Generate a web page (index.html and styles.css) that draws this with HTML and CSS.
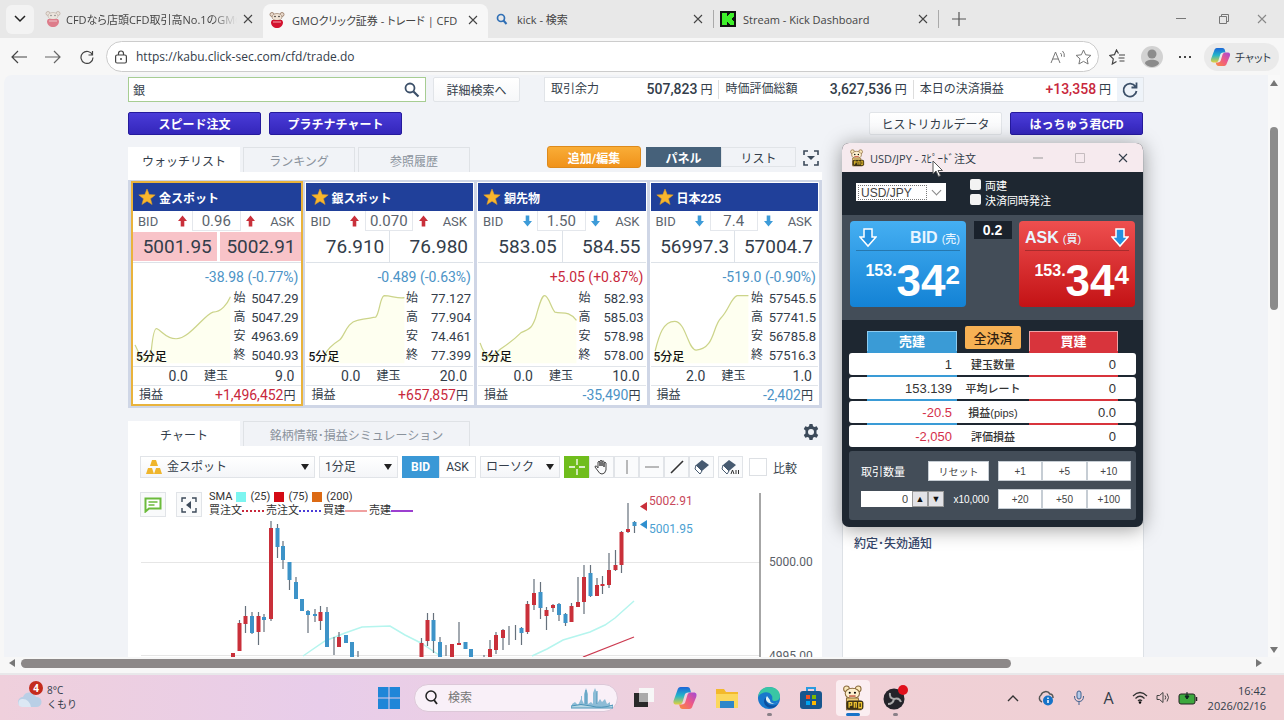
FILE: index.html
```html
<!DOCTYPE html>
<html lang="ja">
<head>
  <meta charset="UTF-8" />
  <meta name="viewport" content="width=device-width, initial-scale=1.0" />
  <title>GMOクリック証券 - トレード | CFD</title>
  <link rel="stylesheet" href="styles.css">
</head>
<body>
  <!-- shared icons -->
  <svg class="defs" aria-hidden="true">
    <symbol id="x" viewBox="0 0 10 10"><path d="M1 1l8 8M9 1L1 9" fill="none" stroke="currentColor" stroke-width="1.1"/></symbol>
    <symbol id="star" viewBox="0 0 18 18"><path d="M9 1l2.200 5.600 6 .3-4.700 3.800 1.600 5.800L9 13.200l-5.100 3.300 1.600-5.800L.8 6.900l6-.3z" fill="#f8b62d" stroke="#d99a2a" stroke-width=".6"/></symbol>
    <symbol id="arrow" viewBox="0 0 10 12"><path d="M5 0l5 6H7v6H3V6H0z" fill="currentColor"/></symbol>
    <symbol id="mascot" viewBox="0 0 16 18"><circle cx="3" cy="3.500" r="2" fill="#e8d9cc" stroke="#a58b78"/><circle cx="13" cy="3.500" r="2" fill="#e8d9cc" stroke="#a58b78"/><ellipse cx="8" cy="6" rx="5" ry="3.500" fill="#efe2d4" stroke="#a58b78" stroke-width=".8"/><path d="M3 9h10l1 2c0 4-3 6-6 6s-6-2-6-6z" fill="#d3122f"/><circle cx="6" cy="5.500" r=".7"/><circle cx="10" cy="5.500" r=".7"/><path d="M4 11h8" stroke="#f5a5ae"/></symbol>
    <symbol id="propug" viewBox="0 0 18 20"><circle cx="4" cy="3" r="2.200" fill="#fbe9bb" stroke="#8a6a3c" stroke-width=".8"/><circle cx="13" cy="3" r="2.200" fill="#fbe9bb" stroke="#8a6a3c" stroke-width=".8"/><ellipse cx="8.500" cy="6.500" rx="5.500" ry="4" fill="#fdf0cf" stroke="#8a6a3c" stroke-width=".8"/><path d="M4 10h9l2 9H4z" fill="#edcf7c" stroke="#8a6a3c" stroke-width=".8"/><circle cx="6.500" cy="6" r=".8"/><circle cx="10.500" cy="6" r=".8"/><path d="M6 8.500h5" stroke="#c0452e"/><rect x="4" y="12" width="13" height="7" rx="2" fill="#3b3013"/><path d="M6 17.500v-4h2v2H6m4 2v-4h1.500v4m2-4h2v4h-2z" stroke="#f0c531" fill="none"/></symbol>
    <symbol id="copilot" viewBox="0 0 22 22">
      <defs>
        <linearGradient id="cpa" x1="0" y1="0" x2="0" y2="1"><stop offset="0" stop-color="#1c66d8"/><stop offset=".5" stop-color="#23b5c9"/><stop offset="1" stop-color="#e4d13a"/></linearGradient>
        <linearGradient id="cpb" x1="1" y1="0" x2="0" y2="1"><stop offset="0" stop-color="#a248d8"/><stop offset=".5" stop-color="#ef5a84"/><stop offset="1" stop-color="#f98c3a"/></linearGradient>
      </defs>
      <path d="M7 1h6c2 0 2.500 1 3 3l.5 2H14c-2 0-3 1-3.500 3L9 14c-.5 2-1.500 3-3.500 3H3c-2.500 0-3-2-2.300-4L4 4c.6-2 1.500-3 3-3z" fill="url(#cpa)"/>
      <path d="M15 21H9c-2 0-2.500-1-3-3l-.5-1H8c2 0 3-1 3.500-3L13 9c.5-2 1.500-3 3.500-3H19c2.500 0 3 2 2.300 4L18 18c-.6 2-1.500 3-3 3z" fill="url(#cpb)"/>
    </symbol>
  </svg>

  <div class="tabbar">
    <button class="tab-menu" aria-label="タブ操作"><svg width="12" height="8" viewBox="0 0 12 8"><path d="M1 1l5 5 5-5" fill="none" stroke="#222" stroke-width="1.500"/></svg></button>
    <div class="tab first">
      <svg class="faded" width="16" height="18"><use href="#mascot"/></svg>
      <span class="tab-title">CFDなら店頭CFD取引高No.1のGMC</span>
      <button class="tab-close" aria-label="閉じる"><svg width="10" height="10"><use href="#x"/></svg></button>
    </div>
    <div class="tab active">
      <svg width="16" height="18"><use href="#mascot"/></svg>
      <span class="tab-title">GMOクリック証券 - トレード | CFD</span>
      <button class="tab-close" aria-label="閉じる"><svg width="10" height="10"><use href="#x"/></svg></button>
    </div>
    <div class="tab">
      <svg width="16" height="18" viewBox="0 0 16 18"><circle cx="7" cy="8" r="3.500" fill="none" stroke="#2f6fb5" stroke-width="1.700"/><path d="M9.500 10.500l3 3.500" stroke="#2f6fb5" stroke-width="2"/></svg>
      <span class="tab-title">kick - 検索</span>
      <button class="tab-close" aria-label="閉じる"><svg width="10" height="10"><use href="#x"/></svg></button>
    </div>
    <div class="tab divided">
      <svg width="16" height="16" viewBox="0 0 16 16"><path d="M0 0h16v16H0z" fill="#111"/><path d="M2 2h5v3h1V4h1V3h1V2h4v4h-1v1h-1v2h1v1h1v4h-4v-1H9v-1H8v-1H7v3H2z" fill="#3fef2b"/></svg>
      <span class="tab-title">Stream - Kick Dashboard</span>
      <button class="tab-close" aria-label="閉じる"><svg width="10" height="10"><use href="#x"/></svg></button>
    </div>
    <button class="new-tab" aria-label="新しいタブ"><svg width="14" height="14" viewBox="0 0 14 14"><path d="M7 0v14M0 7h14" stroke="#555" stroke-width="1.200"/></svg></button>
    <div class="window-controls">
      <button aria-label="最小化"><svg width="10" height="10" viewBox="0 0 10 10"><path d="M0 4.500h10" stroke="#777"/></svg></button>
      <button aria-label="元に戻す"><svg width="10" height="10" viewBox="0 0 10 10"><path d="M.5 2.500h7v7h-7zM2.500 2.500v-2h7v7h-2" fill="none" stroke="#777"/></svg></button>
      <button aria-label="閉じる"><svg class="grey" width="10" height="10"><use href="#x"/></svg></button>
    </div>
  </div>

  <div class="addressbar">
    <button class="nav" aria-label="戻る"><svg width="16" height="14" viewBox="0 0 16 14"><path d="M7 1L1 7l6 6M1 7h15" fill="none" stroke="#444" stroke-width="1.200"/></svg></button>
    <button class="nav" aria-label="進む"><svg width="16" height="14" viewBox="0 0 16 14"><path d="M9 1l6 6-6 6M15 7H0" fill="none" stroke="#666" stroke-width="1.200"/></svg></button>
    <button class="nav" aria-label="更新"><svg width="14" height="14" viewBox="0 0 14 14"><path d="M12.500 5A6 6 0 1 0 13 7.500M12.500 1v4H8.500" fill="none" stroke="#444" stroke-width="1.200"/></svg></button>
    <div class="url-box">
      <svg width="12" height="14" viewBox="0 0 12 14"><rect x=".6" y="5" width="10.800" height="8" rx="1.500" fill="none" stroke="#444" stroke-width="1.200"/><path d="M3.500 5V3.500a2.500 2.500 0 0 1 5 0V5" fill="none" stroke="#444" stroke-width="1.200"/><circle cx="6" cy="9" r="1" fill="#444"/></svg>
      <input type="text" aria-label="アドレス" value="https://kabu.click-sec.com/cfd/trade.do">
      <button aria-label="音声で読み上げる"><svg width="16" height="14" viewBox="0 0 16 14"><path d="M1 13L5.500 2 10 13M2.500 9h6M10.500 3q1.500 1.500 1 3.500M12.500 1q2.500 2.500 1.700 6" fill="none" stroke="#777"/></svg></button>
      <button aria-label="お気に入りに追加"><svg width="17" height="16" viewBox="0 0 17 16"><path d="M8.500 1l2.200 4.800 5.200.6-3.900 3.500 1.100 5.100-4.600-2.600L3.900 15 5 9.900 1.100 6.400l5.200-.6z" fill="none" stroke="#777"/></svg></button>
    </div>
    <button aria-label="お気に入り"><svg width="17" height="16" viewBox="0 0 17 16"><path d="M9.500 4.500L7.500 1 5.500 5.600.8 6.400l3.500 3.500-1 5.100 4.200-2.500M10 6h6M9.500 9h6M10.500 12h5" fill="none" stroke="#444" stroke-width="1.200"/></svg></button>
    <button aria-label="プロフィール"><svg width="22" height="22" viewBox="0 0 22 22"><circle cx="11" cy="11" r="11" fill="#d2d2d2"/><circle cx="11" cy="8" r="4.500" fill="#8b8b8b"/><path d="M4 17.500c0-5 14-5 14 0-3 4.500-11 4.500-14 0z" fill="#8b8b8b"/></svg></button>
    <button aria-label="設定など"><svg width="14" height="4" viewBox="0 0 14 4"><path d="M1 1h2v2H1zM6 1h2v2H6zM11 1h2v2h-2z" fill="#444"/></svg></button>
    <button class="chat"><svg width="21" height="20"><use href="#copilot"/></svg>チャット</button>
  </div>

  <div class="viewport">
    <main class="page">
      <div class="page-inner">
        <div class="top-row">
          <div class="search">
            <input type="text" aria-label="銘柄検索" value="銀">
            <svg width="16" height="16" viewBox="0 0 16 16"><circle cx="6" cy="6" r="4.500" fill="none" stroke="#3c5069" stroke-width="1.800"/><path d="M9.500 9.500l5 5" stroke="#3c5069" stroke-width="2.200"/></svg>
          </div>
          <button class="light-btn detail">詳細検索へ</button>
          <dl class="summary">
            <div><dt>取引余力</dt><dd><b>507,823</b> 円</dd></div>
            <div><dt>時価評価総額</dt><dd><b>3,627,536</b> 円</dd></div>
            <div><dt>本日の決済損益</dt><dd><b class="red">+13,358</b> 円</dd></div>
            <button aria-label="更新"><svg width="18" height="18" viewBox="0 0 18 18"><path d="M14.500 5.500A6.500 6.500 0 1 0 15.500 10M15.500 1.500v5h-5" fill="none" stroke="#3c5069" stroke-width="1.800"/></svg></button>
          </dl>
        </div>
        <div class="link-row">
          <button class="purple-btn">スピード注文</button>
          <button class="purple-btn">プラチナチャート</button>
          <button class="light-btn history">ヒストリカルデータ</button>
          <button class="purple-btn last">はっちゅう君CFD</button>
        </div>

        <div class="columns">
          <div class="main-col">
            <div class="section-head">
              <button class="sec-tab on">ウォッチリスト</button>
              <button class="sec-tab">ランキング</button>
              <button class="sec-tab">参照履歴</button>
              <span class="spacer"></span>
              <button class="orange-btn">追加/編集</button>
              <div class="switch"><button class="on">パネル</button><button>リスト</button></div>
              <button class="icon-btn" aria-label="折りたたむ"><svg width="16" height="16" viewBox="0 0 16 16"><path d="M1 5V1h4M11 1h4v4M15 11v4h-4M5 15H1v-4" fill="none" stroke="#3c4a5a" stroke-width="1.600"/><path d="M4 6h8l-4 4z" fill="#3c4a5a"/></svg></button>
            </div>
            <div class="watch">
              <article class="card selected">
                <h2><svg width="18" height="18"><use href="#star"/></svg>金スポット</h2>
                <div class="spread"><span>BID</span><svg class="up" width="9" height="12"><use href="#arrow"/></svg><b>0.96</b><svg class="up" width="9" height="12"><use href="#arrow"/></svg><span>ASK</span></div>
                <div class="prices hot"><span>5001.95</span><span>5002.91</span></div>
                <div class="change blue">-38.98 (-0.77%)</div>
                <div class="mini">
                  <div class="mini-chart">
                    <svg viewBox="0 0 98 68"><path class="fill" d="M2 50Q5 58 10 64Q16 64 18 54Q20 34 23 34C28 36 32 44 42 44C55 44 70 20 78 18C86 18 92 10 95 3V68H2z"/><path class="line" d="M2 50Q5 58 10 64Q16 64 18 54Q20 34 23 34C28 36 32 44 42 44C55 44 70 20 78 18C86 18 92 10 95 3"/></svg>
                    <span>5分足</span>
                  </div>
                  <dl><dt>始</dt><dd>5047.29</dd><dt>高</dt><dd>5047.29</dd><dt>安</dt><dd>4963.69</dd><dt>終</dt><dd>5040.93</dd></dl>
                </div>
                <div class="position"><span>0.0</span><span class="jp">建玉</span><span>9.0</span></div>
                <div class="profit"><span>損益</span><span><b class="red">+1,496,452</b>円</span></div>
              </article>
              <article class="card">
                <h2><svg width="18" height="18"><use href="#star"/></svg>銀スポット</h2>
                <div class="spread"><span>BID</span><svg class="up" width="9" height="12"><use href="#arrow"/></svg><b>0.070</b><svg class="up" width="9" height="12"><use href="#arrow"/></svg><span>ASK</span></div>
                <div class="prices"><span>76.910</span><span>76.980</span></div>
                <div class="change blue">-0.489 (-0.63%)</div>
                <div class="mini">
                  <div class="mini-chart">
                    <svg viewBox="0 0 98 68"><path class="fill" d="M18 60Q22 52 33 45C38 40 40 28 50 26C58 24 62 24 68 23C72 18 72 4 76 2C84 2 88 5 96 4V68H18z"/><path class="line" d="M18 60Q22 52 33 45C38 40 40 28 50 26C58 24 62 24 68 23C72 18 72 4 76 2C84 2 88 5 96 4"/></svg>
                    <span>5分足</span>
                  </div>
                  <dl><dt>始</dt><dd>77.127</dd><dt>高</dt><dd>77.904</dd><dt>安</dt><dd>74.461</dd><dt>終</dt><dd>77.399</dd></dl>
                </div>
                <div class="position"><span>0.0</span><span class="jp">建玉</span><span>20.0</span></div>
                <div class="profit"><span>損益</span><span><b class="red">+657,857</b>円</span></div>
              </article>
              <article class="card">
                <h2><svg width="18" height="18"><use href="#star"/></svg>銅先物</h2>
                <div class="spread"><span>BID</span><svg class="down" width="9" height="12"><use href="#arrow"/></svg><b>1.50</b><svg class="down" width="9" height="12"><use href="#arrow"/></svg><span>ASK</span></div>
                <div class="prices"><span>583.05</span><span>584.55</span></div>
                <div class="change red">+5.05 (+0.87%)</div>
                <div class="mini">
                  <div class="mini-chart">
                    <svg viewBox="0 0 98 68"><path class="fill" d="M2 48Q6 60 12 62Q18 58 22 54Q34 46 42 38C52 34 53 32 56 24C60 10 62 2 65 2C69 2 71 14 75 18C82 20 88 16 96 26V68H2z"/><path class="line" d="M2 48Q6 60 12 62Q18 58 22 54Q34 46 42 38C52 34 53 32 56 24C60 10 62 2 65 2C69 2 71 14 75 18C82 20 88 16 96 26"/></svg>
                    <span>5分足</span>
                  </div>
                  <dl><dt>始</dt><dd>582.93</dd><dt>高</dt><dd>585.03</dd><dt>安</dt><dd>578.98</dd><dt>終</dt><dd>578.00</dd></dl>
                </div>
                <div class="position"><span>0.0</span><span class="jp">建玉</span><span>10.0</span></div>
                <div class="profit"><span>損益</span><span><b class="blue">-35,490</b>円</span></div>
              </article>
              <article class="card">
                <h2><svg width="18" height="18"><use href="#star"/></svg>日本225</h2>
                <div class="spread"><span>BID</span><svg class="down" width="9" height="12"><use href="#arrow"/></svg><b>7.4</b><svg class="down" width="9" height="12"><use href="#arrow"/></svg><span>ASK</span></div>
                <div class="prices"><span>56997.3</span><span>57004.7</span></div>
                <div class="change blue">-519.0 (-0.90%)</div>
                <div class="mini">
                  <div class="mini-chart">
                    <svg viewBox="0 0 98 68"><path class="fill" d="M4 56C8 40 12 27 23 27C34 27 36 55 44 55C62 54 60 32 68 24C76 16 78 4 84 2H95V68H4z"/><path class="line" d="M4 56C8 40 12 27 23 27C34 27 36 55 44 55C62 54 60 32 68 24C76 16 78 4 84 2H95"/></svg>
                    <span>5分足</span>
                  </div>
                  <dl><dt>始</dt><dd>57545.5</dd><dt>高</dt><dd>57741.5</dd><dt>安</dt><dd>56785.8</dd><dt>終</dt><dd>57516.3</dd></dl>
                </div>
                <div class="position"><span>2.0</span><span class="jp">建玉</span><span>1.0</span></div>
                <div class="profit"><span>損益</span><span><b class="blue">-2,402</b>円</span></div>
              </article>
            </div>

            <div class="section-head chart-head">
              <button class="sec-tab on">チャート</button>
              <button class="sec-tab wide">銘柄情報･損益シミュレーション</button>
              <span class="spacer"></span>
              <button class="icon-btn" aria-label="設定"><svg width="16" height="16" viewBox="0 0 16 16"><path d="M6.500 0h3l.5 2.300 1.500.8 2.200-.8L15.200 5l-1.700 1.500v3L15.200 11l-1.500 2.700-2.200-.8-1.500.8-.5 2.300h-3L6 13.700l-1.500-.8-2.200.8L.8 11l1.700-1.500v-3L.8 5l1.500-2.700 2.200.8L6 2.300z" fill="#3c4a5a"/><circle cx="8" cy="8" r="3" fill="#f1f3f7"/></svg></button>
            </div>
            <div class="chart-card">
              <div class="toolbar">
                <label class="pick product">
                  <svg width="16" height="15" viewBox="0 0 16 15"><path d="M6 0h4l2 6H4zM2 8h4l2 6H0zM10 8h4l2 6H8z" fill="#efb52c"/></svg>
                  <select aria-label="銘柄"><option>金スポット</option></select>
                </label>
                <label class="pick term"><select aria-label="足種"><option>1分足</option></select></label>
                <div class="bidask"><button class="on">BID</button><button>ASK</button></div>
                <label class="pick style"><select aria-label="チャート種類"><option>ローソク</option></select></label>
                <div class="tools">
                  <button class="on" aria-label="十字線"><svg width="18" height="18" viewBox="0 0 18 18"><path d="M9 1v6M9 11v6M1 9h6M11 9h6" stroke="#fff" stroke-width="1.300"/></svg></button>
                  <button aria-label="移動"><svg width="16" height="16" viewBox="0 0 16 16"><path d="M4 12L1 8q0-1.500 1.500-1L4 9V3q1-1.500 2 0v4V2q1-1.500 2 0v5V2.500q1-1.500 2 0V8V4q1-1.500 2 0v7q-1 4-4 4-2.500 0-4-3z" fill="none" stroke="#444"/></svg></button>
                  <button aria-label="垂直線"><svg width="16" height="16" viewBox="0 0 16 16"><path d="M8 1v14" stroke="#777"/></svg></button>
                  <button aria-label="水平線"><svg width="16" height="16" viewBox="0 0 16 16"><path d="M1 8h14" stroke="#777"/></svg></button>
                  <button aria-label="トレンドライン"><svg width="16" height="16" viewBox="0 0 16 16"><path d="M2 14L14 2" stroke="#333" stroke-width="1.600"/></svg></button>
                  <button aria-label="消去"><svg width="16" height="16" viewBox="0 0 16 16"><path d="M8 1l7 5-7 6-6-6z" fill="#465a70"/><path d="M2 6l6 6-2 3-5-5z" fill="#fff" stroke="#465a70"/></svg></button>
                </div>
                <div class="tools"><button aria-label="すべて消去"><svg width="20" height="17" viewBox="0 0 20 17"><path d="M8 1l7 5-7 6-6-6z" fill="#465a70"/><path d="M2 6l6 6-2 3-5-5z" fill="#fff" stroke="#465a70"/><path d="M10 15l1.500-4 1.500 4M15 11v4M17.500 11v4" fill="none" stroke="#333"/></svg></button></div>
                <label class="compare"><input type="checkbox">比較</label>
              </div>
              <div class="plot">
                <svg class="candles" viewBox="128 484 694 174">
                  <path d="M141 562.500h619M141 655.500h619" stroke="#e6e6e6"/>
                  <path d="M760 493v164" stroke="#888" stroke-width="1.500"/>
                  <path class="sma25" d="M303 656L325 641L345 633L362 627L390 626L405 635L421 643L433 651L442 657M532 656L547 649L563 640L590 632L605 625L615 618L634 601"/>
                  <path class="sma75" d="M583 657L634 637"/>
                  <path class="wick" d="M239.500 620V651M245.500 606V633M252 612V634M258.500 612V645M264 614V632M271 521V621M277.500 524V558M283 541V569M289.500 562V590M296 577V599M308 610V633M315 609V622M320.500 606V630M327 607V647M334 637V655M339 632V647M358 651V657M421.500 638V656M427.500 613V646M433.500 613V653M440 637V656M446 645V656M459 622V645M484 655V657M490 640V656M496 632V654M503 629V650M509 626V645M515.500 625V640M521.500 627V645M527.500 601V634M534 579V610M540.500 582V619M546.500 607V630M553 604V612M559 603V621M565.500 613V626M571.500 603V622M578 577V607M584 565V614M590.500 565V597M597 578V596M602.500 576V594M609 553V588M615.500 550V571M621.500 531V573M628 503V533M634.500 521V533"/>
                  <path class="bull" d="M233 653V657M239.500 623V651M245.500 616V624M258.500 616V632M271 528V619M320.500 612V621M339 637V647M421.500 643V657M427.500 620V641M452 644V657M459 643V645M490 649V657M496 635V650M503 630V638M527.500 604V632M534 593V605M546.500 610V616M553 605V608M571.500 606V622M578 602V607M584 577V602M597 585V596M602.500 584V586M609 570V585M615.500 565V570M621.500 532V565M628 529V532"/>
                  <path class="bear" d="M252 616V633M264 617V620M277.500 528V547M283 546V560M289.500 562V580M296 582V599M302 599V611M308 611V615M315 614V616M327 612V647M346 635V643M352 642V657M433.500 620V641M440 642V657M465.500 642V649M471 649V657M521.500 628V633M540.500 592V608M559 604V615M565.500 614V623M590.500 573V596M634.500 522V526"/>
                  <path class="ask-mark" d="M647 502v9l-7-4.500z"/><path class="bid-mark" d="M647 520v9l-7-4.500z"/>
                  <text class="ask-label" x="649" y="505">5002.91</text>
                  <text class="bid-label" x="649" y="533">5001.95</text>
                  <text x="769" y="566">5000.00</text>
                  <text x="769" y="660">4995.00</text>
                </svg>
                <div class="legend">
                  <button aria-label="コメント"><svg width="18" height="16" viewBox="0 0 18 16"><path d="M1.500 1.500h15v10H5l-3.500 3z" fill="#fff" stroke="#6cbb3c" stroke-width="2"/><path d="M4.500 5h9M4.500 8h6" stroke="#6cbb3c" stroke-width="1.500"/></svg></button>
                  <button class="second" aria-label="凡例を閉じる"><svg width="16" height="16" viewBox="0 0 16 16"><path d="M1 5V1h4M11 1h4v4M15 11v4h-4M5 15H1v-4" fill="none" stroke="#3c4a5a" stroke-width="1.400"/><path d="M10 4v8L5 8z" fill="#3c4a5a"/></svg></button>
                  <div class="legend-text">
                    <div>SMA <i class="c25"></i> (25) <i class="c75"></i> (75) <i class="c200"></i> (200)</div>
                    <div class="orders">買注文<s class="dot-red"></s>売注文<s class="dot-blue"></s>買建<s class="pink"></s>売建<s class="violet"></s></div>
                  </div>
                </div>
              </div>
            </div>
          </div>
          <aside class="side-col"><h3>約定･失効通知</h3></aside>
        </div>
      </div>
    </main>
    <div class="vscroll"><svg width="8" height="6" viewBox="0 0 8 6"><path d="M4 0l4 6H0z" fill="#777"/></svg><span></span><svg class="end" width="8" height="6" viewBox="0 0 8 6"><path d="M4 6l4-6H0z" fill="#777"/></svg></div>
  </div>
  <div class="hscroll"><svg width="6" height="8" viewBox="0 0 6 8"><path d="M0 4l6-4v8z" fill="#777"/></svg><span></span><svg class="end" width="6" height="8" viewBox="0 0 6 8"><path d="M6 4L0 0v8z" fill="#777"/></svg></div>

  <footer class="taskbar">
    <div class="weather">
      <div class="weather-icon"><svg width="28" height="22" viewBox="0 0 28 22"><path d="M7 20a5 5 0 0 1 0-10 7 7 0 0 1 13 0 5 5 0 0 1 1 10z" fill="#b9cfe6"/><path d="M6 20a4 4 0 0 1 1-8q6 0 8 8z" fill="#dce8f4"/></svg><b>4</b></div>
      <div>8°C<br>くもり</div>
    </div>
    <div class="apps">
      <button aria-label="スタート"><svg width="24" height="24" viewBox="0 0 24 24"><path d="M1 1h10.500v10.500H1zM12.500 1H23v10.500H12.500zM1 12.500h10.500V23H1zM12.500 12.500H23V23H12.500z" fill="#1f86d8"/></svg></button>
      <label class="task-search">
        <svg width="14" height="15" viewBox="0 0 14 15"><circle cx="7" cy="6" r="5" fill="none" stroke="#222" stroke-width="1.500"/><path d="M10 10l3 4" stroke="#222" stroke-width="1.800"/></svg>
        <input type="text" aria-label="検索" placeholder="検索">
        <svg width="42" height="24" viewBox="0 0 42 24"><path d="M1 22v-4l3-2 3 3 3-6v-3h1v4l2 4V8l2-6 2 6v10l3-2 2 2V7l2-5 2 5v11l3-5 2 3 3-3 2 5 3-2v6z" fill="#8dbcd6"/><path d="M0 20q10-3 20 0t22-1v3H0zM15 4v14M26 5v13" stroke="#4a93b8" fill="#b7d7e4"/></svg>
      </label>
      <button aria-label="タスクビュー"><svg width="24" height="24" viewBox="0 0 24 24"><path d="M8 2h15v14H8z" fill="#f7f7f7"/><path d="M3 7h14v14H3z" fill="#292929"/><path d="M8 7h9v9H8z" fill="#aaa"/></svg></button>
      <button aria-label="Copilot"><svg width="24" height="24"><use href="#copilot"/></svg></button>
      <button aria-label="エクスプローラー"><svg width="24" height="24" viewBox="0 0 24 24"><path d="M1 3h8l2 3h12v16H1z" fill="#f3b92b"/><path d="M1 8h22v14H1z" fill="#fbd75c"/><path d="M5 15h14v7H5z" fill="#2f86c9"/></svg></button>
      <button class="running" aria-label="Edge"><svg width="24" height="24" viewBox="0 0 24 24"><circle cx="12" cy="12" r="11" fill="#1878cc"/><path d="M1 11C2 4 7 1 12 1c7 0 11 4 11 9 0 4-3 5-6 5-3-1-1-3-2-5-3-6-11-4-14 1z" fill="#39c6a4"/><path d="M9 12c-1 5 4 9 10 7 2-1 2-1 1 0-4 5-12 3-13-3 0-3 1-4 2-4z" fill="#0e4f9e"/><path d="M10 10q-3 4 2 7 4 2 9-1l-2 1q-6 1-6-3z" fill="#dff0f4"/></svg></button>
      <button aria-label="Microsoft Store"><svg width="24" height="24" viewBox="0 0 24 24"><path d="M8 6V2h8v4" fill="none" stroke="#2a9be0" stroke-width="2"/><rect x="1" y="5" width="22" height="18" rx="3" fill="#18568e"/><path d="M7 9h4v4H7z" fill="#f25022"/><path d="M13 9h4v4h-4z" fill="#7fba00"/><path d="M7 15h4v4H7z" fill="#00a4ef"/><path d="M13 15h4v4h-4z" fill="#ffb900"/></svg></button>
      <button class="current" aria-label="はっちゅう君CFD"><svg width="24" height="26"><use href="#propug"/></svg></button>
      <button class="running" aria-label="OBS"><svg width="26" height="26" viewBox="0 0 26 26"><circle cx="12" cy="14" r="10.500" fill="#24242a"/><path d="M12 14q-5-1-4-6M12 14q5-2 7 3M12 14q-1 5-6 5" fill="none" stroke="#aaa" stroke-width="2"/><circle cx="21" cy="5" r="5" fill="#e0101c"/></svg></button>
    </div>
    <div class="tray">
      <svg width="12" height="8" viewBox="0 0 12 8"><path d="M1 7l5-5 5 5" fill="none" stroke="#333" stroke-width="1.400"/></svg>
      <svg width="18" height="16" viewBox="0 0 18 16"><path d="M5 12a4 4 0 0 1-1-7 5 5 0 0 1 9-1q3 0 3 4" fill="none" stroke="#555" stroke-width="1.500"/><circle cx="11" cy="10.500" r="5" fill="#1673c8"/><path d="M11 7.500v1.500M11 10v3" stroke="#fff" stroke-width="1.500"/></svg>
      <svg width="12" height="16" viewBox="0 0 12 16"><rect x="4" y="1" width="4" height="8" rx="2" fill="#b4cae8" stroke="#42628f"/><path d="M1.500 6q0 5.500 4.500 5.500T10.500 6M6 12v3" fill="none" stroke="#42628f"/></svg>
      <span class="ime">A</span>
      <div class="status">
        <svg width="16" height="13" viewBox="0 0 16 13"><path d="M1 5q7-7 14 0M3.500 7.500q4.500-4.500 9 0M6 10q2-2 4 0" fill="none" stroke="#333" stroke-width="1.200"/><circle cx="8" cy="11.500" r="1.200"/></svg>
        <svg width="14" height="13" viewBox="0 0 14 13"><path d="M1 4.500h2.500L7 1.500v10L3.500 8.500H1zM9 4.500q1.500 2 0 4M11 2.500q3 4 0 8" fill="none" stroke="#444"/></svg>
        <svg width="20" height="14" viewBox="0 0 20 14"><rect x="1" y="3" width="16" height="10" rx="2" fill="#3ea83e" stroke="#222"/><path d="M18.500 6v4" stroke="#222" stroke-width="1.500"/><path d="M9 1v4M7 5l2 3 2-3z" stroke="#122" fill="#122"/></svg>
      </div>
      <time>16:42<br>2026/02/16</time>
    </div>
  </footer>

  <!-- floating order window -->
  <section class="order">
    <header>
      <svg width="16" height="18"><use href="#propug"/></svg>
      <h1>USD/JPY - ｽﾋﾟｰﾄﾞ注文</h1>
      <button aria-label="最小化"><svg width="10" height="10" viewBox="0 0 10 10"><path d="M0 5h10" stroke="#999"/></svg></button>
      <button aria-label="最大化"><svg width="10" height="10" viewBox="0 0 10 10"><path d="M.5.500h9v9h-9z" fill="none" stroke="#c5bcbf"/></svg></button>
      <button aria-label="閉じる"><svg width="10" height="10"><use href="#x"/></svg></button>
    </header>
    <div class="order-options">
      <label class="pair"><select aria-label="通貨ペア"><option>USD/JPY</option></select></label>
      <div class="checks">
        <label><input type="checkbox">両建</label>
        <label><input type="checkbox">決済同時発注</label>
      </div>
    </div>
    <div class="quotes">
      <button class="quote bid">
        <span class="quote-head"><svg width="18" height="20" viewBox="0 0 18 20"><path d="M5 1h8v8h4l-8 9-8-9h4z" fill="#2491e0" stroke="#fff" stroke-width="1.500"/></svg><span>BID<small>(売)</small></span></span>
        <span class="rate"><span>153.</span><strong>34</strong><em>2</em></span>
      </button>
      <span class="gap-value">0.2</span>
      <button class="quote ask">
        <span class="quote-head"><span>ASK<small>(買)</small></span><svg width="18" height="20" viewBox="0 0 18 20"><path d="M5 1h8v8h4l-8 9-8-9h4z" fill="#2491e0" stroke="#fff" stroke-width="1.500"/></svg></span>
        <span class="rate"><span>153.</span><strong>34</strong><em>4</em></span>
      </button>
    </div>
    <div class="holdings">
      <table>
        <thead>
          <tr><th><span class="sell">売建</span></th><th><button class="close-all">全決済</button></th><th><span class="buy">買建</span></th></tr>
        </thead>
        <tbody>
          <tr><td>1</td><th scope="row">建玉数量</th><td>0</td></tr>
          <tr><td>153.139</td><th scope="row">平均レート</th><td>0</td></tr>
          <tr><td class="red">-20.5</td><th scope="row">損益(pips)</th><td>0.0</td></tr>
          <tr><td class="red">-2,050</td><th scope="row">評価損益</th><td>0</td></tr>
        </tbody>
      </table>
      <div class="amount">
        <div class="amount-left">
          <div class="amount-row"><label for="qty">取引数量</label><button class="reset">リセット</button></div>
          <div class="amount-row"><div class="stepper"><input id="qty" type="text" value="0"><button aria-label="増やす">▲</button><button aria-label="減らす">▼</button></div><span>x10,000</span></div>
        </div>
        <div class="amount-grid">
          <button>+1</button><button>+5</button><button>+10</button>
          <button>+20</button><button>+50</button><button>+100</button>
        </div>
      </div>
    </div>
    <svg class="cursor" width="12" height="18" viewBox="0 0 12 18"><path d="M1 1v13l3-3 2.500 5.500 2-1L6 10.500h4.500z" fill="#fff" stroke="#555"/></svg>
  </section>
</body>
</html>
```
FILE: styles.css
```css
* {
  box-sizing: border-box;
}
body {
  margin: 0;
  height: 100vh;
  display: flex;
  flex-direction: column;
  overflow: hidden;
  position: relative;
  background: #f7f7f7;
  font-family: Roboto, 'Noto Sans CJK JP', sans-serif;
  font-size: 12px;
  color: #333d4a;
}
button, input, select {
  font: inherit;
  color: inherit;
  margin: 0;
  padding: 0;
}
button {
  border: none;
  background: none;
  display: flex;
  align-items: center;
  justify-content: center;
  cursor: pointer;
  white-space: nowrap;
}
select {
  appearance: none;
  border: none;
  background: none;
}
h1, h2, h3, dl, dt, dd {
  margin: 0;
  font-weight: normal;
}
svg {
  flex: none;
}
.defs {
  position: absolute;
  width: 0;
  height: 0;
}
.red { color: #c8283c; }
.blue { color: #4c93c6; }
.spacer { flex: 1; }

/* browser tabs */
.tabbar {
  flex: none;
  height: 38px;
  background: #e8e8e8;
  display: flex;
  align-items: center;
  padding: 0 6px;
  font-family: 'Open Sans', 'Noto Sans CJK JP', sans-serif;
  font-size: 11px;
  color: #444;
}
.tab-menu {
  width: 28px;
  height: 29px;
  border-radius: 6px;
  background: #f3f3f3;
}
.tab {
  flex: 0 1 225px;
  min-width: 0;
  height: 38px;
  padding: 0 9px 0 6px;
  display: flex;
  align-items: center;
  gap: 7px;
}
.tab.first {
  flex-basis: 229px;
  padding-left: 11px;
  gap: 5px;
}
.tab.active {
  height: 34px;
  align-self: flex-end;
  padding-bottom: 3px;
  border-radius: 8px 8px 0 0;
  background: #f7f7f7;
}
.tab.divided {
  border-left: 1px solid #aaa;
  height: 18px;
}
.tab-title {
  flex: 1;
  min-width: 0;
  overflow: hidden;
  white-space: nowrap;
  font-feature-settings: 'palt';
}
.tab.first .tab-title {
  mask-image: linear-gradient(90deg, #000 85%, transparent);
}
.tab-close {
  width: 12px;
  height: 20px;
}
.faded {
  opacity: .5;
}
.new-tab {
  width: 40px;
  height: 18px;
  border-left: 1px solid #aaa;
}
.window-controls {
  margin-left: auto;
  display: flex;
}
.window-controls button {
  width: 43px;
  height: 30px;
}
.window-controls button:last-child {
  width: 33px;
}
.grey {
  color: #888;
}

/* address bar */
.addressbar {
  flex: none;
  height: 37px;
  display: flex;
  align-items: center;
  gap: 15px;
  padding: 3px 5px 3px 9px;
}
.nav {
  width: 19px;
}
.url-box {
  flex: 1;
  height: 31px;
  margin: 0 -5px;
  padding: 0 6px 0 8px;
  border: 1px solid #ccc;
  border-radius: 16px;
  background: #fff;
  display: flex;
  align-items: center;
  gap: 9px;
  font-family: 'Open Sans', sans-serif;
  font-size: 12px;
}
.url-box input {
  flex: 1;
  min-width: 0;
  border: none;
  outline: none;
  background: none;
}
.chat {
  height: 28px;
  padding: 0 8px 0 6px;
  margin-left: -3px;
  border-radius: 14px;
  background: #eaeaea;
  gap: 4px;
  font-size: 11px;
  font-feature-settings: 'palt';
}

/* page area */
.viewport {
  flex: 1;
  min-height: 0;
  display: flex;
  padding: 0 4px;
}
.page {
  flex: 1;
  min-width: 0;
  overflow: hidden;
  background: #f1f3f7;
  border-radius: 8px 0 0 0;
}
.page-inner {
  max-width: 1016px;
  margin: 0 auto;
  padding-top: 2px;
}
.vscroll {
  width: 12px;
  padding: 5px 2px 4px;
  background: #f9f9f9;
  display: flex;
  flex-direction: column;
  align-items: center;
}
.vscroll span {
  width: 8px;
  height: 32%;
  margin-top: 41px;
  border-radius: 4px;
  background: #8c8c8c;
}
.end {
  margin: auto 0 0 auto;
}
.vscroll .end {
  margin: auto 0 0;
}
.hscroll {
  flex: none;
  height: 18px;
  padding: 2px 22px 6px 9px;
  display: flex;
  align-items: center;
  gap: 6px;
  border-bottom: 2px solid #e8e8ea;
}
.hscroll .end {
  margin: 0 0 0 auto;
}
.hscroll span {
  width: 79%;
  height: 9px;
  border-radius: 5px;
  background: #8c8888;
}

.top-row {
  display: flex;
  height: 25px;
}
.search {
  flex: 0 1 298px;
  display: flex;
  align-items: center;
  padding: 0 5px 0 4px;
  border: 1px solid #a7cd92;
  background: #fff;
}
.search input {
  flex: 1;
  min-width: 0;
  border: none;
  outline: none;
  background: none;
}
.light-btn {
  border: 1px solid #e1e4e8;
  background: linear-gradient(#fff, #f6f7f9);
  border-radius: 2px;
}
.detail {
  width: 87px;
  margin-left: 7px;
}
.summary {
  flex: 1;
  margin-left: 24px;
  display: flex;
  align-items: center;
  border: 1px solid #e1e4e8;
  background: #fff;
  line-height: 18px;
}
.summary div {
  flex: 1 1 174px;
  display: flex;
  justify-content: space-between;
  padding: 0 6px;
  white-space: nowrap;
}
.summary div:nth-child(2) {
  flex-basis: 195px;
}
.summary div:nth-child(3) {
  flex-basis: 205px;
}
.summary div + div {
  border-left: 1px solid #ddd;
}
.summary b {
  font-size: 14px;
  font-weight: 500;
}
.summary button {
  width: 26px;
  height: 23px;
  background: #eef3f9;
}
.link-row {
  display: flex;
  gap: 8px;
  margin-top: 10px;
}
.purple-btn {
  width: 133px;
  height: 23px;
  border: 1px solid #251a9c;
  border-radius: 2px;
  background: linear-gradient(#4a3cd8, #3426bb);
  color: #fff;
  font-weight: bold;
}
.history {
  width: 133px;
  margin-left: auto;
}
.purple-btn.last {
  margin-right: 1px;
}
.columns {
  display: flex;
  gap: 20px;
  margin-top: 10px;
}
.main-col {
  flex: 1;
  min-width: 0;
}
.side-col {
  flex: 0 0 302px;
  height: 520px;
  margin-top: 5px;
  padding: 382px 11px 0;
  border: 1px solid #dde1e6;
  background: #fff;
}
.side-col h3 {
  font-size: 12px;
  line-height: 22px;
  color: #34466a;
  font-weight: 500;
}
.section-head {
  display: flex;
  align-items: flex-end;
  gap: 3px;
  height: 27px;
}
.sec-tab {
  flex: 0 0 112px;
  height: 25px;
  border: 1px solid #dfe2e6;
  border-bottom: none;
  color: #8a929c;
}
.sec-tab.on {
  border-color: #fff;
  background: #fff;
  color: #333d4a;
}
.sec-tab.wide {
  flex-basis: 227px;
}
.orange-btn {
  width: 94px;
  height: 22px;
  margin-bottom: 4px;
  border: 1px solid #de8a1c;
  border-radius: 3px;
  background: linear-gradient(#f9ad37, #f0921a);
  color: #fff;
  font-weight: bold;
}
.switch {
  display: flex;
  margin: 0 4px 5px 2px;
}
.switch button {
  width: 75px;
  height: 20px;
  border: 1px solid #e1e4e8;
}
.switch .on {
  border-color: #46617a;
  background: #46617a;
  color: #fff;
  font-weight: bold;
}
.icon-btn {
  height: 16px;
  margin: 0 3px 6px 0;
}

/* watch list */
.watch {
  display: grid;
  grid-template-columns: repeat(4, 1fr);
  gap: 3px;
  padding: 2px 3px 3px 4px;
  border-top: 8px solid #fff;
  background: #cfd6e6;
}
.card {
  min-width: 0;
  border: 1px solid #fff;
  background: #fff;
}
.card.selected {
  border-color: #e9b33c;
  outline: 1px solid #e9b33c;
}
.card h2 {
  height: 28px;
  padding-left: 5px;
  display: flex;
  align-items: center;
  gap: 3px;
  background: #20409a;
  color: #fff;
  font-size: 12px;
  font-weight: bold;
}
.spread {
  height: 20px;
  padding: 0 6px 0 5px;
  display: grid;
  grid-template-columns: 38px 12px 1fr 12px 38px;
  align-items: center;
  font-size: 13px;
  color: #5c646e;
}
.spread span:last-child {
  text-align: right;
}
.spread svg {
  justify-self: center;
}
.spread b {
  height: 20px;
  margin: 0 4px;
  border: 1px solid #e4e7ec;
  border-top: none;
  font-size: 15px;
  line-height: 20px;
  font-weight: normal;
  text-align: center;
}
.up { color: #c9303a; }
.down {
  color: #3d9bd8;
  transform: rotate(180deg);
}
.prices {
  height: 32px;
  display: grid;
  grid-template-columns: 1fr 1fr;
  border-bottom: 1px solid #dde2e8;
  font-size: 19px;
  line-height: 32px;
  text-align: right;
}
.prices span {
  padding-right: 5px;
}
.prices span + span {
  border-left: 1px solid #dde2e8;
}
.prices.hot span {
  height: 29px;
  margin-top: 1px;
  line-height: 30px;
  background: #f8c3c8;
}
.prices.hot span + span {
  border-left: 3px solid #fff;
}
.change {
  height: 26px;
  padding-right: 2px;
  line-height: 28px;
  font-size: 14px;
  text-align: right;
}
.mini {
  height: 77px;
  display: flex;
}
.mini-chart {
  flex: 1;
  min-width: 0;
  position: relative;
}
.mini-chart svg {
  display: block;
  width: 100%;
  height: 71px;
  margin-top: 4px;
}
.mini-chart .fill {
  fill: #fefff0;
}
.mini-chart .line {
  fill: none;
  stroke: #ccd48a;
  stroke-width: 1.2;
}
.mini-chart span {
  position: absolute;
  left: 3px;
  bottom: 2px;
  color: #111;
  font-weight: 500;
}
.mini dl {
  flex: 0 0 67px;
  display: grid;
  grid-template-columns: 12px 1fr;
  grid-auto-rows: 19px;
  line-height: 19px;
  padding-right: 2px;
  font-size: 13px;
  text-align: right;
}
.mini dt {
  font-size: 12px;
}
.position, .profit {
  height: 19px;
  border-top: 1px solid #e1e5ea;
  line-height: 18px;
}
.position {
  display: grid;
  grid-template-columns: 55px 54px 1fr;
  padding-right: 6px;
  font-size: 14px;
  text-align: right;
}
.position .jp {
  font-size: 12px;
  padding-right: 14px;
}
.profit {
  display: flex;
  justify-content: space-between;
  padding: 0 5px 0 6px;
}
.profit b {
  font-size: 14px;
  font-weight: normal;
}

/* chart */
.chart-head {
  margin-top: 11px;
}
.chart-head .icon-btn {
  margin-bottom: 6px;
}
.chart-card {
  background: #fff;
}
.toolbar {
  display: flex;
  align-items: center;
  gap: 4px;
  padding: 10px 22px 0 12px;
}
.pick {
  height: 22px;
  display: flex;
  align-items: center;
  gap: 5px;
  padding: 0 5px;
  border: 1px solid #e1e4e8;
  background: linear-gradient(#fff, #f4f5f8);
}
.pick select {
  flex: 1;
  min-width: 0;
}
.pick::after {
  content: '';
  border: 4px solid transparent;
  border-top: 6px solid #222;
  border-bottom: none;
}
.product { flex: 0 1 175px; }
.term { flex: 0 0 79px; }
.style { flex: 0 0 80px; }
.bidask, .tools {
  display: flex;
}
.bidask button {
  width: 37px;
  height: 22px;
  border: 1px solid #e1e4e8;
}
.bidask .on {
  border-color: #3a98d6;
  background: #3a98d6;
  color: #fff;
  font-weight: bold;
}
.tools button {
  width: 25px;
  height: 22px;
  border: 1px solid #e1e4e8;
  background: #fafbfc;
}
.tools .on {
  border-color: #70bd1c;
  background: #70bd1c;
}
.compare {
  display: flex;
  align-items: center;
  gap: 6px;
  margin-left: 2px;
  white-space: nowrap;
}
.compare input {
  appearance: none;
  width: 18px;
  height: 18px;
  border: 1px solid #dde0e4;
  background: #fff;
}
.plot {
  display: grid;
  margin-top: 6px;
}
.candles, .legend {
  grid-area: 1 / 1;
}
.candles {
  display: block;
  width: 100%;
}
.candles path {
  fill: none;
}
.candles .ask-mark { fill: #c9303a; }
.candles .bid-mark { fill: #2f8fcf; }
.candles text {
  font-size: 12px;
  fill: #5a6068;
}
.candles .ask-label { fill: #c8485a; }
.candles .bid-label { fill: #4c9fd2; }
.wick {
  stroke: #66717c;
  stroke-width: 1.2;
}
.bull {
  stroke: #c9303a;
  stroke-width: 4;
}
.bear {
  stroke: #3d93c8;
  stroke-width: 4;
}
.sma25 {
  stroke: #b5f5ee;
  stroke-width: 1.5;
}
.sma75 {
  stroke: #cc3a50;
  stroke-width: 1.3;
}
.legend {
  align-self: start;
  display: flex;
  padding: 6px 0 0 12px;
}
.legend button {
  width: 26px;
  height: 25px;
  margin-top: 2px;
  border: 1px solid #e1e4e8;
  background: #f9fafb;
}
.legend .second {
  margin: 2px 7px 0 10px;
}
.legend-text {
  font-size: 11px;
  line-height: 14px;
  color: #333;
  white-space: nowrap;
}
.legend-text div {
  display: flex;
  align-items: center;
  gap: 4px;
}
.legend-text .orders {
  gap: 0;
}
.legend-text i {
  width: 10px;
  height: 10px;
}
.c25 { background: #7cf5f0; }
.c75 { background: #d40a14; }
.c200 { background: #dc6a14; }
.legend-text s {
  width: 22px;
  margin-right: 2px;
  border-top: 2px solid;
}
.legend-text .dot-red {
  color: #c8283c;
  border-top-style: dotted;
}
.legend-text .dot-blue {
  color: #4a3cd8;
  border-top-style: dotted;
}
.pink { color: #f0a0a0; }
.violet { color: #9c3fd0; }

/* taskbar */
.taskbar {
  flex: none;
  height: 45px;
  display: grid;
  grid-template-columns: 1fr auto 1fr;
  align-items: center;
  background: linear-gradient(90deg, #efd0dc, #e8cdea 25%, #ecd0e2 42%, #f0d0d6 65%, #efd0d4);
  font-family: 'Open Sans', 'Noto Sans CJK JP', sans-serif;
  font-size: 10px;
}
.weather {
  display: flex;
  gap: 3px;
  padding-left: 16px;
  line-height: 14px;
}
.weather-icon {
  position: relative;
  padding-top: 4px;
}
.weather-icon b {
  position: absolute;
  top: -2px;
  right: 1px;
  width: 14px;
  height: 14px;
  border-radius: 50%;
  background: #c42b1c;
  color: #fff;
  text-align: center;
}
.apps {
  display: flex;
  align-items: center;
  gap: 8px;
}
.apps button {
  width: 34px;
  height: 36px;
  border-radius: 4px;
  position: relative;
}
.apps .current {
  background: #fbeef1;
}
.running::after, .current::after {
  content: '';
  position: absolute;
  bottom: 0;
  width: 5px;
  height: 3px;
  border-radius: 2px;
  background: #8a8088;
}
.apps .current::after {
  width: 14px;
  background: #1a73c9;
}
.task-search {
  width: 204px;
  height: 28px;
  padding: 0 4px 0 9px;
  border: 1px solid #dcc8d8;
  border-radius: 14px;
  background: #f9f0f8;
  display: flex;
  align-items: center;
  gap: 10px;
  font-size: 12px;
}
.task-search input {
  flex: 1;
  min-width: 0;
  border: none;
  background: none;
}
.tray {
  display: flex;
  align-items: center;
  justify-content: flex-end;
  gap: 18px;
  padding-right: 18px;
}
.tray time {
  font-size: 11px;
  line-height: 15px;
  text-align: right;
  margin-left: -8px;
}
.ime {
  font-size: 16px;
}
.status {
  display: flex;
  align-items: center;
  gap: 8px;
}

/* order window */
.order {
  position: absolute;
  left: 842px;
  top: 143px;
  width: 301px;
  border-radius: 7px;
  background: #1e2731;
  box-shadow: 0 2px 20px rgba(0, 0, 0, .4);
  font-family: 'Liberation Sans', 'Noto Sans CJK JP', sans-serif;
}
.order header {
  height: 29px;
  padding: 0 3px 0 7px;
  display: flex;
  align-items: center;
  border-radius: 7px 7px 0 0;
  background: #f6eaee;
  font-family: 'Open Sans', 'Noto Sans CJK JP', sans-serif;
}
.order h1 {
  flex: 1;
  margin-left: 5px;
  font-size: 11px;
}
.order header button {
  width: 42px;
  height: 28px;
}
.order header button:last-child {
  width: 35px;
  margin-left: 4px;
}
.order-options {
  height: 43px;
  padding: 5px 14px;
  display: flex;
  gap: 24px;
  font-size: 12px;
  color: #fff;
}
.pair {
  width: 90px;
  height: 18px;
  margin-top: 6px;
  padding: 2px 4px 2px 2px;
  background: #fff;
  color: #444;
  display: flex;
  align-items: center;
  gap: 6px;
}
.pair select {
  flex: 1;
  min-width: 0;
  height: 15px;
  padding-left: 2px;
  border: 1px dotted #777;
}
.pair::after {
  content: '';
  width: 6px;
  height: 6px;
  margin: 0 2px 4px 0;
  border: solid #888;
  border-width: 0 1px 1px 0;
  transform: rotate(45deg);
}
.checks label {
  display: flex;
  align-items: center;
  gap: 4px;
  height: 15px;
  font-size: 11px;
}
.checks input {
  appearance: none;
  width: 11px;
  height: 11px;
  border-radius: 2px;
  background: #f3f3f3;
}
.quotes {
  height: 105px;
  padding: 6px 8px 0;
  display: flex;
  justify-content: space-between;
  align-items: flex-start;
  background: #434d58;
}
.quote {
  width: 116px;
  height: 86px;
  padding: 5px 6px;
  border-radius: 4px;
  flex-direction: column;
  align-items: stretch;
  justify-content: flex-start;
  color: #e9f5ff;
}
.bid { background: linear-gradient(#45aff2, #1382d5); }
.ask { background: linear-gradient(#ee4f4f, #c31215); }
.quote-head {
  height: 25px;
  display: flex;
  align-items: center;
  justify-content: space-between;
  border-bottom: 1px solid rgba(0, 0, 0, .25);
  font-size: 16px;
  font-weight: bold;
}
.bid .quote-head { padding-left: 3px; }
.quote small {
  margin-left: 4px;
  font-size: 11px;
  font-weight: 500;
}
.rate {
  display: flex;
  align-items: flex-start;
  justify-content: flex-end;
  padding-top: 10px;
  font-weight: bold;
  color: #fff;
}
.rate span {
  font-size: 16px;
  line-height: 20px;
}
.rate strong {
  font-size: 44px;
  line-height: 40px;
}
.rate em {
  font-size: 26px;
  font-style: normal;
  line-height: 28px;
}
.gap-value {
  width: 38px;
  padding: 1px 0;
  background: #1a222c;
  color: #fff;
  font-size: 14px;
  font-weight: bold;
  text-align: center;
}
.holdings {
  padding: 4px 7px 7px;
}
.holdings table {
  width: 100%;
  table-layout: fixed;
  border-collapse: separate;
  border-spacing: 0 2px;
  background: linear-gradient(90deg, transparent 18px, #3a9bd6 18px 108px, transparent 108px 180px, #d8343c 180px 269px, transparent 269px) 0 27px / 100% calc(100% - 32px) no-repeat;
}
.holdings thead th {
  height: 25px;
  padding: 0;
  background: #1e2731;
  vertical-align: bottom;
}
.holdings thead th:nth-child(2) {
  width: 72px;
  vertical-align: top;
}
.holdings th:first-child, .holdings td:first-child {
  width: 108px;
}
.sell, .buy {
  display: block;
  height: 20px;
  margin-left: 18px;
  border: 1px solid #8ccbf0;
  border-bottom: none;
  background: #3a9bd6;
  color: #fff;
  font-size: 13px;
  line-height: 19px;
}
.buy {
  margin: 0 18px 0 0;
  border-color: #f0a0a4;
  background: #d8343c;
}
.close-all {
  width: 56px;
  height: 23px;
  margin: 0 auto;
  border-radius: 2px;
  background: #f7b154;
  color: #332211;
  font-size: 13px;
  font-weight: 500;
}
.holdings tbody td, .holdings tbody th {
  height: 22px;
  padding: 0;
  background: #fff;
  text-align: right;
  font-size: 13px;
}
.holdings tbody td {
  color: #333;
}
.holdings tbody td.red {
  color: #d4304a;
}
.holdings tbody td:first-child {
  padding-right: 5px;
  border-radius: 3px 0 0 3px;
}
.holdings tbody td:last-child {
  padding-right: 20px;
  border-radius: 0 3px 3px 0;
}
.holdings tbody th {
  color: #333;
  font-size: 11px;
  font-weight: 500;
  text-align: center;
  white-space: nowrap;
}
.amount {
  height: 69px;
  margin-top: 2px;
  padding: 10px 5px 0 12px;
  display: flex;
  justify-content: space-between;
  border-radius: 3px;
  background: #434d58;
  color: #fff;
  font-size: 11px;
}
.amount-left {
  width: 128px;
}
.amount-row {
  height: 20px;
  margin-bottom: 8px;
  display: flex;
  align-items: center;
  justify-content: space-between;
}
.reset {
  width: 61px;
  height: 20px;
  border: 1px solid #c6cdd4;
  background: #fff;
  color: #444;
  font-size: 10px;
}
.amount-row > span {
  font-size: 10px;
}
.stepper {
  display: flex;
  height: 16px;
}
.stepper input {
  width: 51px;
  padding-right: 4px;
  border: none;
  text-align: right;
  color: #444;
}
.stepper button {
  width: 16px;
  border: 1px solid #999;
  background: #e2e2e6;
  color: #111;
  font-size: 9px;
}
.amount-grid {
  width: 133px;
  display: grid;
  grid-template-columns: repeat(3, 1fr);
  grid-auto-rows: 20px;
  row-gap: 8px;
}
.amount-grid button {
  border: 1px solid #c6cdd4;
  background: #fff;
  color: #444;
  font-size: 10px;
}
.cursor {
  position: absolute;
  left: 90px;
  top: 17px;
}
```
